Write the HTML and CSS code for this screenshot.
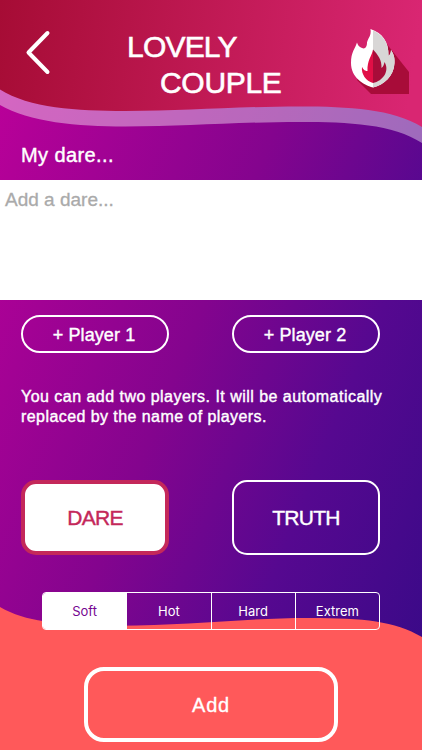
FILE: index.html
```html
<!DOCTYPE html>
<html lang="en">
<head>
<meta charset="utf-8">
<title>Lovely Couple</title>
<link rel="stylesheet" href="styles.css">
</head>
<body>
<main class="screen">
  <svg class="backdrop" viewBox="0 0 422 750" aria-hidden="true">
    <defs>
      <linearGradient id="header" x1="0" x2="1" y1="0" y2="0.04">
        <stop offset="0" stop-color="#a60c35"/>
        <stop offset="1" stop-color="#d92672"/>
      </linearGradient>
    </defs>
    <path fill="#fff" fill-opacity=".4" d="M0 0H422V143C393 124 349 122 300 122C233 122 185 126.500 125 126.500C77 126.500 29 122 0 105Z"/>
    <path fill="url(#header)" d="M0 0H422V127C393 109 349 106.500 300 106.500C233 106.500 185 111 125 111C77 111 29 108 0 89.500Z"/>
    <path fill="#ff595a" d="M0 607C26 622 58 624 101 625.500C177 627 238 618 309 618C365 618 394 621 422 637V750H0Z"/>
  </svg>
  <header class="top">
    <svg class="back" viewBox="0 0 28 46" role="img" aria-label="Back"><path d="M23.500 3L4.500 22.500L23.500 42"/></svg>
    <h1 class="title"><span class="first">LOVELY</span><span class="second">COUPLE</span></h1>
    <svg class="flame" viewBox="0 0 60 68" role="img" aria-label="Flame">
      <path fill="#a80c39" d="M35 14L58 43V65H20L6 51Z"/>
      <path fill="#fff" d="M19.500 0C20.500 7 17 9 16 13.500C16 18 14 20.500 11 19C8 18 6.500 15.500 6 13.500C4 20 0 23 0 34C0 48 12 56 22 58.500C33 56 43 47 43.500 34C44 28 42 24 40 21C40 24 39 26 37.500 27C38 12 31 4 19.500 0Z"/>
      <path fill="#d8d6d6" d="M22 1.200C32 6 38 14 37.500 27C39 26 40 24 40 21C42 24 44 28 43.500 34C43 47 33 56 22 58.500Z"/>
      <path fill="#e10f46" d="M22 20.500C21 27 16 31 16.500 42C13 42 12 39.500 11 38C10 45 15 52 22 54Z"/>
      <path fill="#a80c39" d="M22 20.500C27 26 31 31 30.500 39C32 38 33 36 33.500 33C39 42 32 52 22 54Z"/>
    </svg>
  </header>
  <label class="heading" for="dare">My dare...</label>
  <textarea class="entry" id="dare" placeholder="Add a dare..."></textarea>
  <div class="row players">
    <button class="player">+ Player 1</button>
    <button class="player">+ Player 2</button>
  </div>
  <p class="hint"><span class="line1">You can add two players. It will be automatically</span><br><span class="line2">replaced by the name of players.</span></p>
  <div class="row types">
    <button class="type selected">DARE</button>
    <button class="type">TRUTH</button>
  </div>
  <div class="levels">
    <button class="level active">Soft</button>
    <button class="level">Hot</button>
    <button class="level">Hard</button>
    <button class="level">Extrem</button>
  </div>
  <button class="add">Add</button>
</main>
</body>
</html>
```
FILE: styles.css
```css
* { box-sizing: border-box; }
body { margin: 0; }
button {
  margin: 0;
  padding: 0;
  background: none;
  color: #fff;
  font-family: inherit;
}
.screen {
  position: relative;
  isolation: isolate;
  display: flex;
  flex-direction: column;
  width: 422px;
  height: 750px;
  overflow: hidden;
  background: linear-gradient(112deg, #c0009a 0%, #84048e 45%, #560890 70%, #340a86 100%);
  color: #fff;
  font-family: "Liberation Sans", sans-serif;
}
.backdrop {
  position: absolute;
  inset: 0;
  z-index: -1;
  width: 422px;
  height: 750px;
}
.top {
  display: flex;
  flex: none;
  height: 136px;
  padding-left: 24px;
}
.back {
  width: 28px;
  height: 46px;
  margin-top: 30px;
  fill: none;
  stroke: #fff;
  stroke-width: 4;
  stroke-linecap: round;
  stroke-linejoin: round;
}
.title {
  width: 180px;
  margin: 29px 0 0 74px;
  font-size: 30px;
  font-weight: 400;
  line-height: 35.5px;
  -webkit-text-stroke: 0.6px #fff;
}
.title span { display: block; }
.first { padding-left: 1px; letter-spacing: -0.8px; }
.second { padding-left: 34px; letter-spacing: -0.3px; }
.flame {
  width: 60px;
  height: 68px;
  margin: 29px 0 0 45px;
}
.heading {
  flex: none;
  height: 44px;
  padding-left: 21px;
  font-size: 20px;
  letter-spacing: 0.4px;
  line-height: 38px;
  -webkit-text-stroke: 0.4px #fff;
}
.entry {
  flex: none;
  width: 100%;
  height: 120px;
  padding: 8px 5px;
  border: 0;
  background: #fff;
  font: 19px/24px "Liberation Sans", sans-serif;
  resize: none;
}
.entry::placeholder {
  color: #aaa;
  opacity: 1;
  -webkit-text-stroke: 0.3px #aaa;
}
.row {
  display: flex;
  flex: none;
  justify-content: space-between;
  padding: 0 42px 0 21px;
}
.players { margin-top: 15px; }
.player {
  width: 148px;
  height: 38px;
  padding: 2px 2px 0 0;
  border: 2px solid #fff;
  border-radius: 19px;
  font-size: 18px;
  letter-spacing: 0.1px;
  -webkit-text-stroke: 0.4px #fff;
}
.hint {
  flex: none;
  margin: 34px 0 0 21px;
  font-size: 16px;
  line-height: 19.5px;
  white-space: nowrap;
  -webkit-text-stroke: 0.4px #fff;
}
.line1 { letter-spacing: 0.47px; }
.line2 { letter-spacing: 0.43px; }
.types { margin-top: 54px; }
.type {
  width: 148px;
  height: 75px;
  padding-top: 1px;
  border: 2px solid #fff;
  border-radius: 15px;
  font-size: 21px;
  letter-spacing: -0.7px;
  -webkit-text-stroke: 0.4px currentColor;
}
.selected {
  border: 4px solid #c4285a;
  background: #fff;
  color: #c4285a;
}
.levels {
  display: flex;
  flex: none;
  width: 338px;
  height: 38px;
  margin: 37px 0 0 42px;
  border: 1px solid #fff;
  border-radius: 4px;
  overflow: hidden;
}
.level {
  flex: 1;
  border: 0;
  border-left: 1px solid #fff;
  font: 13px Inter, sans-serif;
}
.active {
  border-left: 0;
  background: #fff;
  color: #760591;
}
.add {
  flex: none;
  width: 254px;
  height: 75px;
  margin: 37px 0 0 84px;
  padding-top: 2px;
  border: 4px solid #fff;
  border-radius: 20px;
  font-size: 20px;
  letter-spacing: 0.8px;
  -webkit-text-stroke: 0.3px #fff;
}
```
